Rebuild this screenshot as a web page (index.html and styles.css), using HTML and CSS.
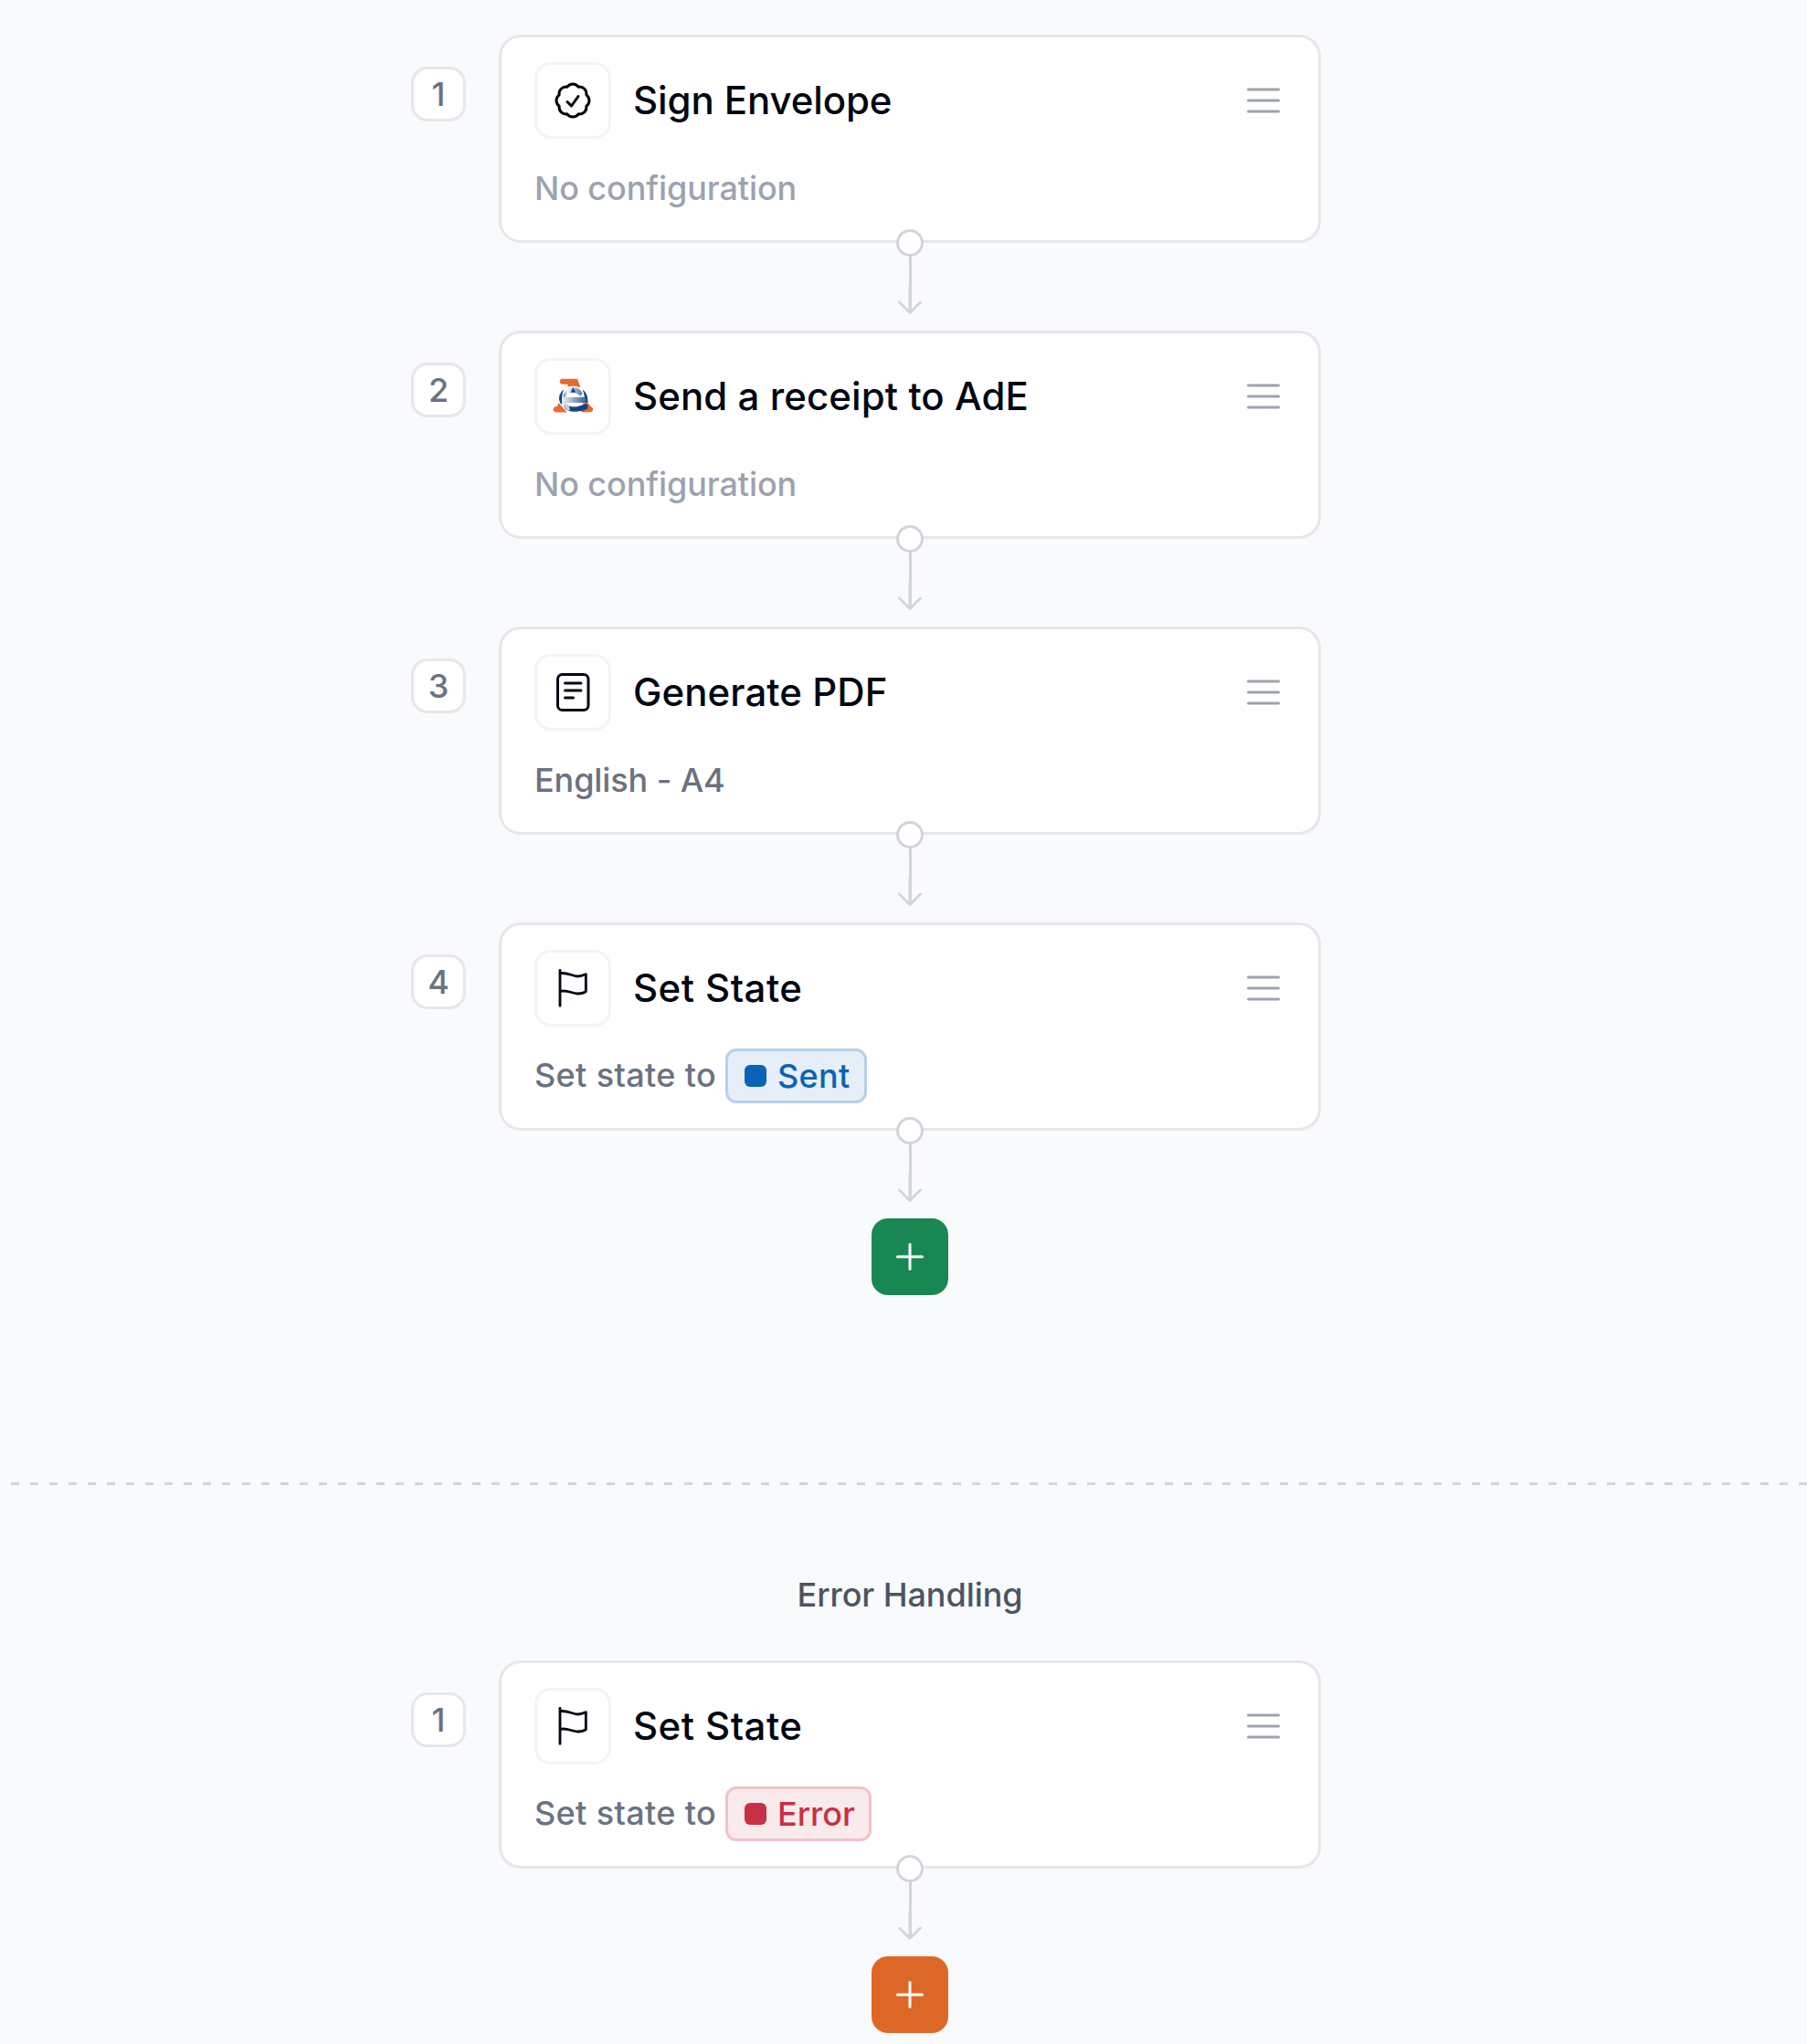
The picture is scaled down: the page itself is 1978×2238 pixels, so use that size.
FILE: index.html
```
<!DOCTYPE html>
<html lang="en">
<head>
<meta charset="utf-8">
<title>Workflow</title>
<link rel="stylesheet" href="styles.css">
</head>
<body>
<svg class="sprite" aria-hidden="true">
  <symbol id="menu" viewBox="0 0 48 48">
    <path d="M7.5 12h33M7.5 24h33M7.5 36h33" fill="none" stroke="currentColor" stroke-width="3" stroke-linecap="round"/>
  </symbol>
  <symbol id="flag" viewBox="24 39 234 234">
    <path d="M99 97V214M99 107C124 103 137 116 157 117C168 117 177 113 184 110V167C176 173 166 174 157 174C137 173 124 161 99 166" fill="none" stroke="currentColor" stroke-width="8.5" stroke-linecap="round" stroke-linejoin="round"/>
  </symbol>
  <symbol id="connector" viewBox="0 0 30 111">
    <path d="M15.5 29V91" stroke="currentColor" stroke-width="3"/>
    <path d="M15 62V91" stroke="currentColor" stroke-width="3"/>
    <path d="M3.5 80L15 91.500L26.500 80" fill="none" stroke="currentColor" stroke-width="2.700" stroke-linecap="round" stroke-linejoin="round"/>
    <circle cx="15" cy="15" r="13.500" fill="#fff" stroke="currentColor" stroke-width="3"/>
  </symbol>
  <symbol id="plus" viewBox="0 0 30 30">
    <path d="M15 1.500V28.500M1.500 15H28.500" stroke="currentColor" stroke-width="3" stroke-linecap="round"/>
  </symbol>
</svg>

<main class="flow">
  <section class="lane">
    <div class="step">
      <span class="num">1</span>
      <article class="card">
        <header class="head">
          <span class="icon"><svg class="seal" viewBox="0 0 24 24"><path d="M9 12.75 11.25 15 15 9.750M21 12c0 1.268-.63 2.390-1.593 3.068a3.745 3.745 0 0 1-1.043 3.296 3.745 3.745 0 0 1-3.296 1.043A3.745 3.745 0 0 1 12 21c-1.268 0-2.390-.63-3.068-1.593a3.746 3.746 0 0 1-3.296-1.043 3.745 3.745 0 0 1-1.043-3.296A3.745 3.745 0 0 1 3 12c0-1.268.63-2.390 1.593-3.068a3.745 3.745 0 0 1 1.043-3.296 3.746 3.746 0 0 1 3.296-1.043A3.746 3.746 0 0 1 12 3c1.268 0 2.390.63 3.068 1.593a3.746 3.746 0 0 1 3.296 1.043 3.746 3.746 0 0 1 1.043 3.296A3.745 3.745 0 0 1 21 12Z" fill="none" stroke="#000" stroke-width="1.500" stroke-linecap="round" stroke-linejoin="round"/></svg></span>
          <h2 class="title">Sign Envelope</h2>
          <svg class="menu"><use href="#menu"/></svg>
        </header>
        <p class="detail empty">No configuration</p>
      </article>
    </div>
    <div class="link"><svg class="connector"><use href="#connector"/></svg></div>

    <div class="step">
      <span class="num">2</span>
      <article class="card">
        <header class="head">
          <span class="icon"><svg class="glyph" viewBox="24 30 234 234">
            <defs>
              <linearGradient id="steel" x1="0" x2="1"><stop offset="0" stop-color="#1b427c"/><stop offset=".22" stop-color="#f4f7fa"/><stop offset="1" stop-color="#1b427c"/></linearGradient>
              <linearGradient id="bar" x1="0" x2="1"><stop offset="0" stop-color="#eef2f6"/><stop offset="1" stop-color="#3a5d91"/></linearGradient>
            </defs>
            <path d="M107 89H156L166 117H126L124 107H106Q98 105 98 98Q98 90 107 89Z" fill="#e96a31"/>
            <path d="M99 179L119 199H87Q77 198 77 190Q77 181 88 180ZM170 169H186L193 179Q207 181 208 190Q206 199 196 199H170Z" fill="#e96a31"/>
            <path d="M94 168L122 199H84ZM174 168H190L204 185L196 197H170Z" fill="#e96a31"/>
            <ellipse cx="142" cy="152" rx="46" ry="39" fill="#fff"/>
            <path d="M112 124Q94 139 96 157Q97 168 105 174L105 152Q106 134 112 124Z" fill="#16437e"/>
            <path d="M172 124Q189 137 190 157V168H180V150Q178 134 172 124Z" fill="#16437e"/>
            <path d="M112 138Q125 117 142 117Q164 117 173 138L164 148Q158 137 142 136Q128 136 119 148L109 151Z" fill="url(#steel)" opacity=".75"/>
            <path d="M142 118L151 134H134Z" fill="#16437e"/>
            <path d="M107 149H182Q188 158 185 168H120Q126 179 145 181L126 195Q108 185 105 168Z" fill="url(#bar)"/>
            <path d="M118 148Q124 136 143 136Q159 137 166 148Z" fill="#fff"/>
            <path d="M172 169H188L191 177L180 176Z" fill="#e96a31"/>
            <path d="M114 176Q142 186 165 178Q176 174 182 171L190 175Q193 184 186 190Q170 197 144 197Q130 198 119 190L113 181Z" fill="#16437e"/>
            <path d="M112 175L128 180L132 191L126 194Q116 187 112 175Z" fill="#cbd6e3"/>
          </svg></span>
          <h2 class="title receipt">Send a receipt to AdE</h2>
          <svg class="menu"><use href="#menu"/></svg>
        </header>
        <p class="detail empty">No configuration</p>
      </article>
    </div>
    <div class="link"><svg class="connector"><use href="#connector"/></svg></div>

    <div class="step">
      <span class="num">3</span>
      <article class="card">
        <header class="head">
          <span class="icon"><svg class="glyph" viewBox="0 0 78 78"><g fill="none" stroke="currentColor" stroke-width="3" stroke-linecap="round"><rect x="22.500" y="19.500" width="33.500" height="39" rx="5"/><path d="M30.500 29H48M30.500 37H48M30.500 45H39.500"/></g></svg></span>
          <h2 class="title receipt">Generate PDF</h2>
          <svg class="menu"><use href="#menu"/></svg>
        </header>
        <p class="detail format">English - A4</p>
      </article>
    </div>
    <div class="link"><svg class="connector"><use href="#connector"/></svg></div>

    <div class="step">
      <span class="num">4</span>
      <article class="card">
        <header class="head">
          <span class="icon"><svg class="glyph"><use href="#flag"/></svg></span>
          <h2 class="title state">Set State</h2>
          <svg class="menu"><use href="#menu"/></svg>
        </header>
        <p class="detail"><span class="label">Set state to</span> <span class="tag sent">Sent</span></p>
      </article>
    </div>
    <div class="link"><svg class="connector"><use href="#connector"/></svg></div>
    <button class="add" aria-label="Add step"><svg class="plus"><use href="#plus"/></svg></button>
  </section>

  <div class="divider"></div>

  <section class="lane">
    <h3 class="lane-title">Error Handling</h3>
    <div class="step">
      <span class="num">1</span>
      <article class="card">
        <header class="head">
          <span class="icon"><svg class="glyph"><use href="#flag"/></svg></span>
          <h2 class="title state">Set State</h2>
          <svg class="menu"><use href="#menu"/></svg>
        </header>
        <p class="detail"><span class="label">Set state to</span> <span class="tag error">Error</span></p>
      </article>
    </div>
    <div class="link"><svg class="connector"><use href="#connector"/></svg></div>
    <button class="add warn" aria-label="Add error step"><svg class="plus"><use href="#plus"/></svg></button>
  </section>
</main>
</body>
</html>
```
FILE: styles.css
```
* { box-sizing: border-box; }

body {
  margin: 0;
  background: #f9fafc;
  color: #030712;
  font-family: Inter, "Liberation Sans", sans-serif;
  font-weight: 500;
}

h2, h3, p { margin: 0; font-weight: 500; }
svg { display: block; }
.sprite { display: none; }

.flow {
  min-height: 2238px;
  padding-top: 38px;
}

.lane {
  width: 996px;
  margin-left: 450px;
  display: flex;
  flex-direction: column;
}

.step {
  display: flex;
  gap: 36px;
}

.num {
  width: 60px;
  height: 60px;
  margin-top: 35px;
  border: 3px solid #e5e7eb;
  border-radius: 18px;
  background: #fff;
  color: #6b7280;
  font-size: 36px;
  line-height: 54px;
  text-align: center;
}

.card {
  width: 900px;
  height: 228px;
  padding: 27px 36px;
  border: 3px solid #e5e7eb;
  border-radius: 24px;
  background: #fff;
  display: flex;
  flex-direction: column;
  gap: 24px;
}

.head {
  display: flex;
  align-items: center;
  gap: 24px;
}

.icon {
  width: 84px;
  height: 84px;
  border: 3px solid #f3f4f6;
  border-radius: 18px;
  display: flex;
  align-items: center;
  justify-content: center;
}

.seal { width: 48px; height: 48px; }
.glyph { width: 78px; height: 78px; }

.title {
  flex: 1;
  font-size: 42px;
  line-height: 60px;
  letter-spacing: -0.1px;
}

.receipt { letter-spacing: 0.07px; }
.state { letter-spacing: 0.45px; }

.menu {
  width: 48px;
  height: 48px;
  color: #9ca3af;
}

.detail {
  display: flex;
  align-items: center;
  gap: 10px;
  height: 60px;
  color: #6b7280;
  font-size: 36px;
  line-height: 54px;
}

.empty { color: #9ca3af; letter-spacing: -0.08px; }
.format { letter-spacing: -0.1px; }

.label {
  margin-top: -2px;
  letter-spacing: 0.35px;
}

.tag {
  height: 60px;
  padding: 0 15px 0 18px;
  border: 3px solid;
  border-radius: 12px;
  display: flex;
  align-items: center;
  gap: 12px;
}

.tag::before {
  content: "";
  width: 24px;
  height: 24px;
  border-radius: 6px;
  background: currentColor;
}

.sent { color: #0b63b5; background: #e6eef7; border-color: #b6d0e9; letter-spacing: 0.3px; }
.error { color: #c73045; background: #f9eaec; border-color: #f0c3c9; }

.link {
  height: 96px;
  margin-left: 96px;
  display: flex;
  justify-content: center;
}

.connector {
  position: relative;
  width: 30px;
  height: 111px;
  margin-top: -15px;
  color: #d1d5db;
}

.add {
  width: 84px;
  height: 84px;
  margin-left: 504px;
  padding: 0;
  border: 0;
  border-radius: 18px;
  background: #198754;
  color: #fff;
  display: flex;
  align-items: center;
  justify-content: center;
}

.warn { background: #dd6727; }
.plus { width: 30px; height: 30px; }

.divider {
  height: 3px;
  margin: 205px 0 93px 12px;
  background: repeating-linear-gradient(to right, #d1d5db 0 9px, transparent 9px 21.043px);
}

.lane-title {
  margin: 0 0 45px 96px;
  color: #4b5563;
  font-size: 36px;
  line-height: 54px;
  letter-spacing: -0.06px;
  text-align: center;
}
```
